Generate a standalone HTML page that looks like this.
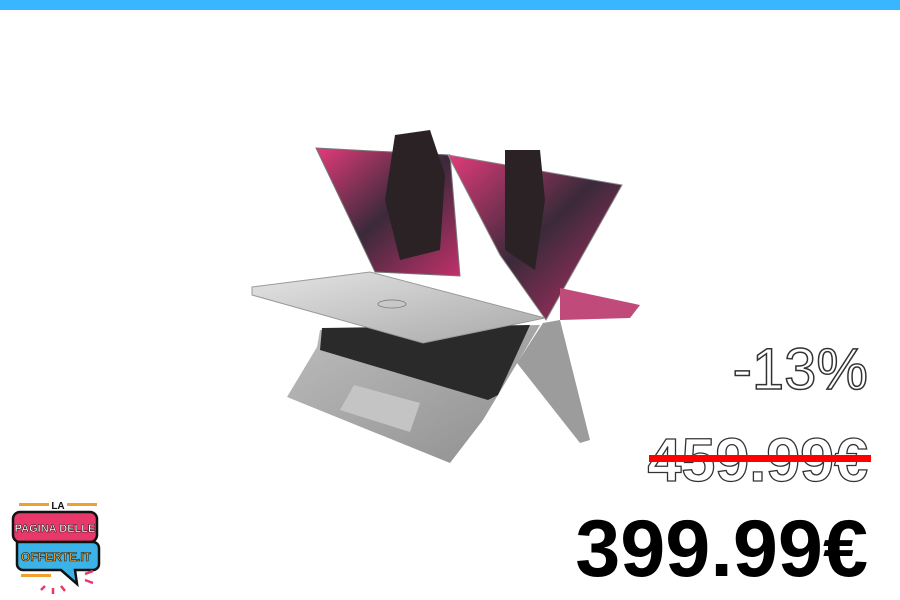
<!DOCTYPE html>
<html><head><meta charset="utf-8"><style>
body{margin:0;width:900px;height:600px;background:#fff;position:relative;overflow:hidden;font-family:"Liberation Sans",sans-serif}
.bar{position:absolute;left:0;top:0;width:900px;height:10px;background:#38b6ff}
.t{position:absolute;right:32px;white-space:nowrap;line-height:1}
.disc{top:341px;font-size:58px;color:#fff;-webkit-text-stroke:1.5px #333}
.old{top:430px;font-size:61px;font-weight:bold;color:#fff;-webkit-text-stroke:1.3px #333}
.strike{position:absolute;left:649px;top:455px;width:222px;height:7px;background:#f00}
.new{top:509px;font-size:81px;font-weight:bold;color:#000}
</style></head><body>
<div class="bar"></div>
<svg width="900" height="600" style="position:absolute;left:0;top:0">
<defs>
<linearGradient id="scr" x1="0" y1="0" x2="1" y2="1"><stop offset="0" stop-color="#e23b7a"/><stop offset=".5" stop-color="#3a2a3a"/><stop offset="1" stop-color="#c2306a"/></linearGradient>
<linearGradient id="sil" x1="0" y1="0" x2="1" y2="1"><stop offset="0" stop-color="#e4e4e4"/><stop offset="1" stop-color="#a8a8a8"/></linearGradient>
<linearGradient id="base" x1="0" y1="0" x2="1" y2="1"><stop offset="0" stop-color="#bdbdbd"/><stop offset="1" stop-color="#8e8e8e"/></linearGradient>
</defs>
<polygon points="316,148 450,155 460,276 375,272" fill="url(#scr)" stroke="#777"/>
<polygon points="448,155 622,185 546,320 500,255" fill="url(#scr)" stroke="#888"/>
<polygon points="395,135 430,130 445,175 440,250 400,260 385,200" fill="#2b2226"/>
<polygon points="505,150 540,150 545,200 535,270 505,250" fill="#2b2226"/>
<polygon points="560,288 640,305 630,318 560,320" fill="#c04a7a"/>
<polygon points="543,323 560,320 590,440 580,443 517,363" fill="#9c9c9c"/>
<polygon points="320,330 540,325 483,420 450,463 287,397 317,347" fill="url(#base)"/>
<polygon points="322,328 530,325 498,395 488,400 320,350" fill="#2a2a2a"/>
<polygon points="354,385 420,403 410,432 340,410" fill="#c4c4c4"/>
<polygon points="252,287 370,272 545,318 423,343 252,295" fill="url(#sil)" stroke="#999"/>
<ellipse cx="392" cy="304" rx="14" ry="4" fill="none" stroke="#888"/>
</svg>
<svg width="110" height="100" style="position:absolute;left:5px;top:498px" viewBox="0 0 110 100">
<rect x="14" y="5" width="30" height="3" fill="#f0a030"/><rect x="62" y="5" width="30" height="3" fill="#f0a030"/>
<text x="53" y="11" font-size="10" font-weight="bold" text-anchor="middle" fill="#111">LA</text>
<rect x="8" y="14" width="84" height="30" rx="7" fill="#e8386a" stroke="#111" stroke-width="2.5"/>
<text x="50" y="34" font-size="11" font-weight="bold" text-anchor="middle" fill="#fff" stroke="#111" stroke-width=".5">PAGINA DELLE</text>
<path d="M12 44 H88 a6 6 0 0 1 6 6 V66 a6 6 0 0 1-6 6 H70 L72 86 L56 72 H18 a6 6 0 0 1-6-6 Z" fill="#3bb3e8" stroke="#111" stroke-width="2.5"/>
<text x="51" y="63" font-size="12" font-weight="bold" text-anchor="middle" fill="#f7a531" stroke="#111" stroke-width=".6">OFFERTE.IT</text>
<rect x="16" y="76" width="30" height="3" fill="#f0a030"/>
<path d="M40 88 l-4 4 M48 90 l0 6 M56 88 l4 5 M80 76 l8 -3 M80 82 l8 3" stroke="#e8386a" stroke-width="2.5"/>
</svg>
<div class="t disc">-13%</div>
<div class="t old">459.99€</div>
<div class="strike"></div>
<div class="t new">399.99€</div>
</body></html>
